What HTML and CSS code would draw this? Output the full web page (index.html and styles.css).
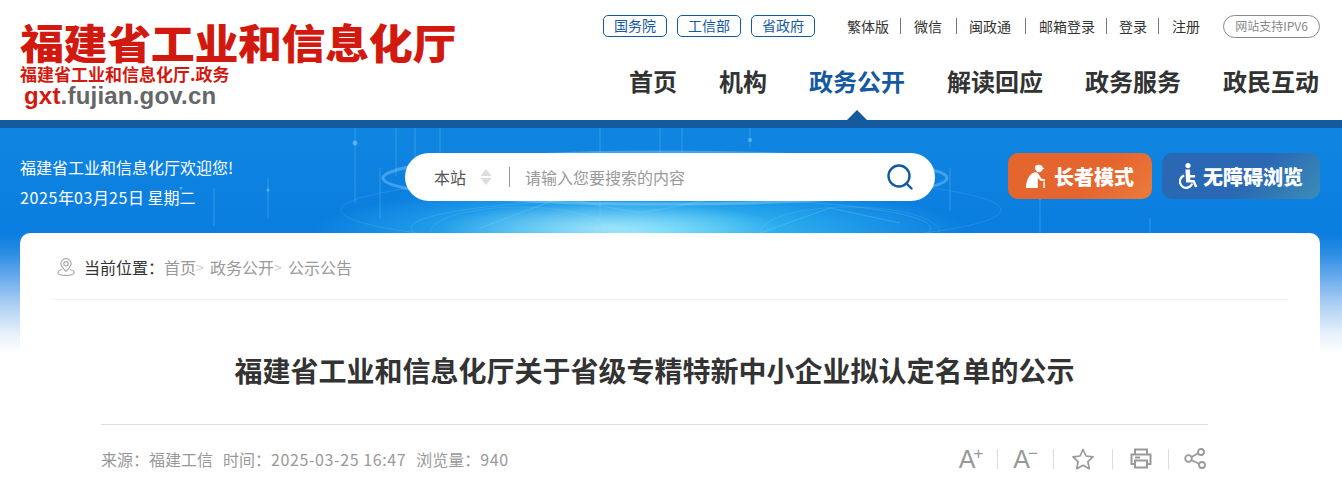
FILE: index.html
```html
<!DOCTYPE html>
<html lang="zh-CN">
<head>
    <meta charset="UTF-8">
    <meta name="viewport" content="width=device-width, initial-scale=1.0">
    <title>福建省工业和信息化厅关于省级专精特新中小企业拟认定名单的公示</title>
    <link rel="stylesheet" href="styles.css">
</head>
<body>
    <header class="header">
        <a class="logo" href="#">
            <div class="logo-name">福建省工业和信息化厅</div>
            <div class="logo-sub">福建省工业和信息化厅.政务</div>
            <div class="logo-url"><span class="logo-red">gxt</span>.fujian.gov.cn</div>
        </a>
        <div class="header-right">
            <div class="top-links">
                <a class="chip" href="#">国务院</a>
                <a class="chip" href="#">工信部</a>
                <a class="chip" href="#">省政府</a>
                <ul class="util-links">
                    <li><a href="#">繁体版</a></li>
                    <li><a href="#">微信</a></li>
                    <li><a href="#">闽政通</a></li>
                    <li><a href="#">邮箱登录</a></li>
                    <li><a href="#">登录</a></li>
                    <li><a href="#">注册</a></li>
                </ul>
                <span class="ipv6">网站支持IPV6</span>
            </div>
            <nav class="nav">
                <a href="#">首页</a>
                <a href="#">机构</a>
                <a href="#" class="active">政务公开</a>
                <a href="#">解读回应</a>
                <a href="#">政务服务</a>
                <a href="#">政民互动</a>
            </nav>
        </div>
    </header>

    <section class="hero">
        <!-- background decoration of the banner -->
        <svg class="hero-art" width="1342" height="230" viewBox="0 0 1342 230" fill="none">
            <g stroke="#7fd4fa" stroke-opacity=".3">
                <path d="M355 0V75M396 0V48M415 0V48M600 0V60M660 0V52M682 0V48M750 0V20M440 40V0"/>
                <path d="M600 60V105M380 40V90M268 50V90M214 60V98M950 40V82M1040 70V105M1150 90V105"/>
                <path d="M480 100L560 70L640 85L720 70M760 105L830 80L900 95"/>
            </g>
            <g fill="#9fe0ff" fill-opacity=".45">
                <circle cx="355" cy="15" r="2.500"/>
                <circle cx="750" cy="12" r="2"/>
                <circle cx="833" cy="30" r="2"/>
                <circle cx="181" cy="60" r="1.500"/>
                <circle cx="268" cy="62" r="1.500"/>
                <circle cx="1040" cy="70" r="1.500"/>
            </g>
            <g stroke="#bfeaff">
                <ellipse cx="665" cy="50" rx="282" ry="26" stroke-opacity=".3" stroke-width="3"/>
                <ellipse cx="671" cy="82" rx="330" ry="36" stroke-opacity=".12"/>
                <ellipse cx="671" cy="100" rx="260" ry="30" stroke-opacity=".15"/>
                <ellipse cx="520" cy="105" rx="90" ry="26" stroke-opacity=".12"/>
                <ellipse cx="850" cy="105" rx="90" ry="26" stroke-opacity=".12"/>
            </g>
        </svg>

        <div class="tools">
            <div class="welcome">
                <p>福建省工业和信息化厅欢迎您!</p>
                <p><span class="num">2025</span>年<span class="num">03</span>月<span class="num">25</span>日 星期二</p>
            </div>
            <form class="search">
                <span class="search-scope">本站</span>
                <svg class="scope-arrows" width="12" height="18" viewBox="0 0 12 18">
                    <path d="M6 1l5.500 7H.5zM6 17L.5 10h11z" fill="#ddd"/>
                </svg>
                <input class="search-input" type="text" placeholder="请输入您要搜索的内容">
                <svg class="search-icon" width="26" height="26" viewBox="0 0 26 26" fill="none" stroke="#15599f" stroke-width="2.400">
                    <circle cx="12" cy="12" r="10.500"/>
                    <path d="M19.500 19.500l5 5" stroke-linecap="round"/>
                </svg>
            </form>
            <div class="mode-btns">
                <a class="mode-btn elder" href="#">
                    <svg width="20" height="24" viewBox="0 0 20 24" fill="#fff">
                        <path d="M9 2.500C10 .6 13.500 0 15.500 1.500c1 .8 1.400 1.700 1.400 2.400l2 .8-2.300.6c-.4 2-2 3.200-4 3-2.200-.2-3.800-2.400-3.600-5.800z"/>
                        <path d="M8 8.500c2-.8 4 .2 5 2.200l2.500 4 3.500.6v1.700l-4.500-.3-2.700-2.700V24H0c0-7 3-13.800 8-15.500z"/>
                        <path d="M17.300 17.500h1.500V24h-1.500z"/>
                    </svg>
                    长者模式
                </a>
                <a class="mode-btn barrier" href="#">
                    <svg width="20" height="26" viewBox="0 0 20 26" fill="none">
                        <circle cx="9" cy="2.600" r="2.600" fill="#fff"/>
                        <path d="M6.500 6.500h4.600v5.500h5v2.500h-5l.3 2.500h4l2.900 6.500-2.200.9-2.200-5H7z" fill="#fff"/>
                        <path d="M5.200 12.500a6.300 6.300 0 1 0 8 8" stroke="#fff" stroke-width="2.200"/>
                    </svg>
                    无障碍浏览
                </a>
            </div>
        </div>

        <main class="card">
            <div class="crumbs">
                <svg class="crumb-pin" width="18" height="18" viewBox="0 0 18 18" fill="none" stroke="#a9a9a9" stroke-width="1.200">
                    <path d="M9 13.200C6 10.400 3.800 8.500 3.800 5.800a5.200 5.200 0 0 1 10.400 0c0 2.700-2.200 4.600-5.200 7.400z"/>
                    <circle cx="9" cy="5.800" r="2.200"/>
                    <path d="M5 11.500c-2.600.7-4.200 2-4 3.300.3 1.500 2 2.500 8 2.500s7.700-1 8-2.500c.2-1.300-1.400-2.600-4-3.300"/>
                </svg>
                <span class="crumb-label">当前位置&#xFF1A;</span>
                <a href="#">首页</a><span class="crumb-sep">&gt;</span>
                <a href="#">政务公开</a><span class="crumb-sep">&gt;</span>
                <a href="#">公示公告</a>
            </div>

            <article class="article">
                <h1 class="article-title">福建省工业和信息化厅关于省级专精特新中小企业拟认定名单的公示</h1>
                <div class="article-meta">
                    <div class="meta-text">
                        <span>来源&#xFF1A;福建工信</span>
                        <span>时间&#xFF1A;<span class="num">2025-03-25 16:47</span></span>
                        <span>浏览量&#xFF1A;<span class="num">940</span></span>
                    </div>
                    <div class="meta-tools">
                        <span class="tool tool-font">A<i>+</i></span>
                        <span class="tool tool-font">A<i>−</i></span>
                        <span class="tool">
                            <svg width="24" height="22" viewBox="0 0 24 22" fill="none" stroke="#999" stroke-width="1.700" stroke-linejoin="round">
                                <path d="M12 1.500l3 6.500 7 .9-5.100 4.800 1.300 7L12 17.300l-6.200 3.400 1.300-7L2 8.900 9 8z"/>
                            </svg>
                        </span>
                        <span class="tool">
                            <svg width="22" height="21" viewBox="0 0 22 21" fill="none" stroke="#999" stroke-width="2">
                                <path d="M5 6V1.500h12V6M5 16H1.500V6.500h19V16H17"/>
                                <path d="M5 12.500h12v7H5zM5 9.500h5"/>
                            </svg>
                        </span>
                        <span class="tool">
                            <svg width="22" height="21" viewBox="0 0 22 21" fill="none" stroke="#999" stroke-width="1.800">
                                <circle cx="4.500" cy="10.500" r="3.300"/>
                                <circle cx="17" cy="4" r="3"/>
                                <circle cx="18" cy="17" r="3"/>
                                <path d="M7.500 9l6.800-3.800M7.500 12.300l7.800 3.500"/>
                            </svg>
                        </span>
                    </div>
                </div>
            </article>
        </main>
    </section>
</body>
</html>
```

FILE: styles.css
```css
* {
    box-sizing: border-box;
}
html, body {
    height: 489px;
    margin: 0;
    overflow: hidden;
}
body {
    font-family: "Noto Sans CJK SC", "Noto Sans", sans-serif;
    font-size: 16px;
    color: #333;
    background: #fff;
}
a {
    color: inherit;
    text-decoration: none;
}
p, ul, h1 {
    margin: 0;
    padding: 0;
}
.num {
    letter-spacing: .6px;
}

/* header */
.header {
    display: flex;
    justify-content: space-between;
    height: 120px;
    padding: 0 22px 0 20px;
}
.logo {
    display: block;
    padding-top: 20px;
    color: #d2190f;
}
.logo-name {
    font-size: 44px;
    line-height: 44px;
    font-weight: 900;
    letter-spacing: -.4px;
    white-space: nowrap;
    transform: scaleY(.92);
    transform-origin: 0 30%;
}
.logo-sub {
    font-size: 17px;
    line-height: 20px;
    font-weight: 700;
    white-space: nowrap;
}
.logo-url {
    margin-top: 1px;
    margin-left: 4px;
    font-family: "Liberation Sans", sans-serif;
    font-size: 24px;
    line-height: 22px;
    font-weight: 700;
    letter-spacing: .2px;
    color: #666;
}
.logo-red {
    color: #d2190f;
}
.header-right {
    display: flex;
    flex-direction: column;
    align-items: flex-end;
}
.top-links {
    display: flex;
    align-items: center;
    height: 23px;
    margin-top: 15px;
}
.chip {
    width: 64px;
    height: 22px;
    margin-right: 10px;
    margin-top: -1px;
    border: 1px solid #15599f;
    border-radius: 5px;
    color: #15599f;
    font-size: 14px;
    line-height: 19px;
    text-align: center;
}
.chip:nth-child(3) {
    margin-right: 0;
}
.util-links {
    display: flex;
    margin-left: 32px;
    margin-top: -2px;
    list-style: none;
    font-size: 14px;
    line-height: 16px;
}
.util-links li {
    padding-right: 11px;
    margin-right: 13px;
    border-right: 1px solid #777;
}
.util-links li:nth-child(2), .util-links li:nth-child(3) {
    padding-right: 14px;
    margin-right: 12px;
}
.util-links li:nth-child(3) {
    margin-right: 13px;
}
.util-links li:nth-child(4) {
    margin-right: 12px;
}
.util-links li:last-child {
    padding-right: 0;
    margin-right: 23px;
    border-right: 0;
}
.ipv6 {
    width: 97px;
    height: 23px;
    border: 1px solid #888;
    border-radius: 12px;
    color: #888;
    font-size: 12px;
    line-height: 20px;
    text-align: center;
    white-space: nowrap;
}
.nav {
    display: flex;
    gap: 42px;
    margin-top: 25px;
    margin-right: 1px;
    font-size: 24px;
    line-height: 36px;
    font-weight: 700;
}
.nav a {
    position: relative;
    display: block;
    height: 57px;
}
.nav .active {
    color: #15599f;
}
.nav .active::after {
    content: "";
    position: absolute;
    left: 38px;
    bottom: 0;
    border: 10px solid transparent;
    border-top: 0;
    border-bottom-color: #15599f;
}

/* blue banner */
.hero {
    position: relative;
    height: 369px;
    padding: 0 22px 0 20px;
    border-top: 8px solid #15599f;
    background:
        radial-gradient(ellipse 170px 26px at 610px 100px, rgba(255,255,255,.5), rgba(120,225,255,0) 100%),
        radial-gradient(ellipse 330px 50px at 640px 105px, rgba(70,215,250,.95), rgba(40,170,240,0) 100%),
        linear-gradient(180deg, #1085e0 0, #0a7de0 105px, #2a8de4 125px, #6aacec 150px, #a8cdf2 175px, #e6f0fb 205px, #fff 225px);
}
.hero-art {
    position: absolute;
    left: 0;
    top: 0;
}
.tools {
    position: relative;
    display: flex;
    align-items: flex-start;
    height: 105px;
    padding-top: 25px;
}
.welcome {
    width: 385px;
    margin-top: -1px;
    color: #fff;
    font-size: 16px;
    line-height: 30px;
}
.search {
    display: flex;
    align-items: center;
    width: 530px;
    height: 48px;
    padding: 0 22px 0 29px;
    border-radius: 24px;
    background: #fff;
}
.search-scope {
    color: #555;
}
.scope-arrows {
    margin-left: 14px;
}
.search-input {
    flex: 1;
    min-width: 0;
    height: 20px;
    margin-left: 17px;
    padding: 0 0 0 15px;
    border: 0;
    border-left: 1px solid #999;
    outline: 0;
    font: inherit;
    line-height: 20px;
    color: #333;
}
.search-input::placeholder {
    color: #999;
}
.mode-btns {
    display: flex;
    gap: 10px;
    margin-left: auto;
}
.mode-btn {
    display: flex;
    align-items: center;
    justify-content: center;
    gap: 8px;
    height: 46px;
    border-radius: 10px;
    color: #fff;
    font-size: 20px;
    font-weight: 900;
}
.elder {
    width: 144px;
    background: linear-gradient(135deg, #e5652f 60%, #ec7b3c);
}
.barrier {
    width: 158px;
    gap: 4px;
    background: linear-gradient(135deg, #2a68b3 55%, #3b8db8);
}

/* article card */
.card {
    position: relative;
    width: 1300px;
    height: 300px;
    padding: 0 32px;
    border-radius: 10px 10px 0 0;
    background: #fff;
}
.crumbs {
    display: flex;
    align-items: center;
    height: 67px;
    padding: 2px 0 0 5px;
    border-bottom: 1px solid #f2f2f2;
    color: #999;
    font-size: 16px;
}
.crumb-pin {
    margin-right: 9px;
}
.crumb-label {
    width: 80px;
    color: #333;
}
.crumb-sep {
    width: 8px;
    margin-right: 6px;
    color: #ccc;
    font-size: 14px;
}
.article {
    padding: 0 80px 0 49px;
}
.article-title {
    height: 125px;
    padding-top: 48px;
    border-bottom: 1px solid #ddd;
    font-size: 28px;
    line-height: 44px;
    font-weight: 700;
    text-align: center;
    white-space: nowrap;
}
.article-meta {
    display: flex;
    justify-content: space-between;
    align-items: center;
    height: 67px;
    color: #999;
}
.meta-text {
    display: flex;
    gap: 10px;
}
.meta-tools {
    display: flex;
    margin-right: 2px;
}
.tool {
    display: flex;
    align-items: center;
    justify-content: center;
    width: 56px;
    height: 20px;
    border-left: 1px solid #ddd;
}
.tool:first-child {
    width: 52px;
    border-left: 0;
}
.tool:nth-child(3) {
    width: 59px;
}
.tool:last-child {
    width: 38px;
    justify-content: flex-end;
}
.tool-font {
    font-family: "Liberation Sans", sans-serif;
    font-size: 25px;
    line-height: 20px;
}
.tool-font i {
    align-self: flex-start;
    margin-left: -2px;
    font-style: normal;
    font-size: 17px;
    line-height: 10px;
}
```
